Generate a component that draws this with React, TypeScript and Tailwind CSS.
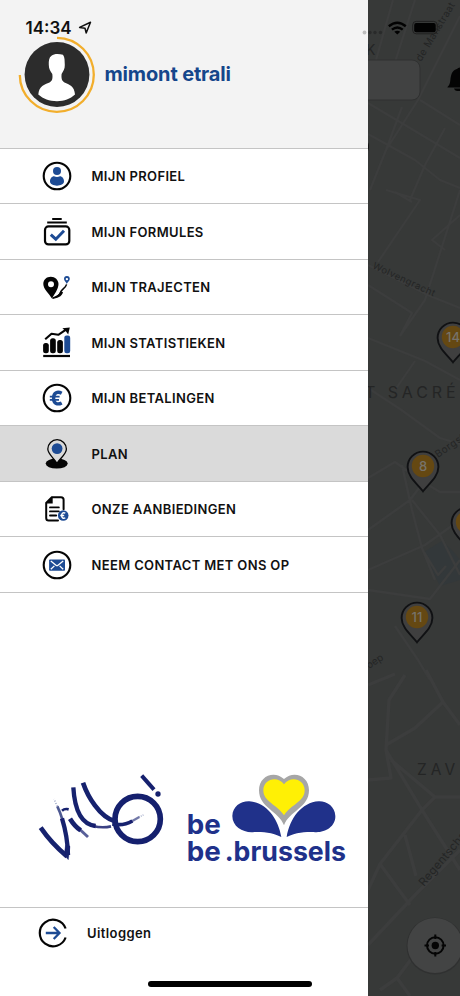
import type { ReactNode } from 'react';

const BLUE = '#1d4b94';

function Icon({ children }: { children: ReactNode }) {
  return (
    <svg width="32" height="32" viewBox="0 0 32 32" fill="none" className="shrink-0">
      {children}
    </svg>
  );
}

const ring = <circle cx="16" cy="16" r="13.3" stroke="#050505" strokeWidth="2.1" />;

const ProfileIcon = (
  <Icon>
    {ring}
    <circle cx="16" cy="11" r="4" fill={BLUE} />
    <path d="M9 21.5C9 18.5 11 16.3 13 16.3Q16 17.8 19 16.3C21 16.3 23 18.5 23 21.5C23 27 9 27 9 21.5Z" fill={BLUE} />
  </Icon>
);

const FormulaIcon = (
  <Icon>
    <path d="M11.2 2.9H20.7M6.2 6.6H25.8" stroke="#050505" strokeWidth="2" />
    <rect x="4" y="10.4" width="24.3" height="18" rx="3.5" stroke="#050505" strokeWidth="2.2" />
    <path d="M9.8 18.6L14.8 23.2L23 14.8" stroke={BLUE} strokeWidth="3" />
  </Icon>
);

const RouteIcon = (
  <Icon>
    <path
      fillRule="evenodd"
      d="M11 27.5C8 22.5 2.3 18 2.3 13C2.3 8.6 5.8 5.8 9.8 5.8C14 5.8 17.5 9 17.5 13C17.5 18 13.5 23 11 27.5ZM10 10.2A3 3 0 1 0 10 16.2A3 3 0 1 0 10 10.2Z"
      fill="#050505"
    />
    <path d="M11.5 27.2C17.5 25.5 19 24 19.6 21.2C20.3 18.3 24.5 17.3 25.6 13.4" stroke="#050505" strokeWidth="1.5" />
    <path d="M11 27.6C15.5 25.5 18.3 23.5 19.3 20.5L22 21C21 25.8 16 27.5 11 27.6Z" fill="#050505" />
    <path
      fillRule="evenodd"
      d="M25.8 13C25.3 11 23 9.8 23 8A2.9 2.9 0 0 1 28.8 8C28.8 9.8 26.4 11 25.8 13ZM25.9 6.9A1.2 1.2 0 1 0 25.9 9.3A1.2 1.2 0 1 0 25.9 6.9Z"
      fill={BLUE}
    />
  </Icon>
);

const StatsIcon = (
  <Icon>
    <path d="M2.2 29H29" stroke="#050505" strokeWidth="2.2" />
    <rect x="2.1" y="16" width="5.7" height="10.3" rx="2.5" fill="#050505" />
    <rect x="9.1" y="11.2" width="5.7" height="15.1" rx="2.5" fill="#050505" />
    <rect x="16.2" y="13" width="5.7" height="13.3" rx="2.5" fill="#050505" />
    <rect x="23.3" y="8.5" width="5.9" height="17.8" rx="2.2" fill={BLUE} />
    <path d="M4.2 12.3L10.5 6.7L17.3 7.8L25 2.7" stroke="#050505" strokeWidth="2.1" strokeLinejoin="round" />
    <path d="M21.4 1.3L28.8 .5L27.2 7.5L25 4.5Z" fill="#050505" />
  </Icon>
);

const PaymentIcon = (
  <Icon>
    {ring}
    <path d="M20.7 11.3C16.7 9.2 12.6 10.4 12.6 16.2C12.6 21.8 16.7 23 20.7 20.9" stroke={BLUE} strokeWidth="3.4" />
    <path d="M8.8 14.7H18.6M8.8 17.8H18" stroke={BLUE} strokeWidth="1.8" />
  </Icon>
);

const PlanIcon = (
  <Icon>
    <ellipse cx="15.7" cy="25.6" rx="11" ry="5" fill="#050505" />
    <path d="M16 25.5C13.6 20.5 6.8 16.3 6.8 11A9.3 9.3 0 0 1 25.4 11C25.4 16.3 18.7 20.5 16 25.5Z" fill="#dadada" stroke="#050505" strokeWidth="1.3" />
    <circle cx="16.1" cy="10.6" r="5.4" fill={BLUE} />
  </Icon>
);

const OfferIcon = (
  <Icon>
    <path d="M17 27.5H7.6Q5.2 27.5 5.2 25V10L10.8 4.2H20Q22.6 4.2 22.6 6.8V16.3" stroke="#050505" strokeWidth="2" strokeLinecap="round" />
    <path d="M5.2 10.5L11.7 3.5V10.5Z" fill="#050505" />
    <path d="M9 14.4H17.8M9 18.4H17.8M9 22.5H15.2" stroke="#050505" strokeWidth="1.9" strokeLinecap="round" />
    <circle cx="22.2" cy="22.5" r="5.3" fill={BLUE} />
    <path d="M24.3 20.2C21.7 18.9 20.6 21 20.6 22.6C20.6 24.5 22 26 24.3 24.9M19.3 22.5H23.2" stroke="white" strokeWidth="1.4" />
  </Icon>
);

const ContactIcon = (
  <Icon>
    {ring}
    <rect x="8.1" y="10.4" width="15.9" height="11.3" rx="0.8" fill={BLUE} />
    <path d="M9.8 12L15 16.2Q16 17 17 16.2L22.2 12M9.8 20.3L13.4 16.9M22.2 20.3L18.6 16.9" stroke="white" strokeWidth="1.3" />
  </Icon>
);

const items = [
  { label: 'MIJN PROFIEL', icon: ProfileIcon },
  { label: 'MIJN FORMULES', icon: FormulaIcon },
  { label: 'MIJN TRAJECTEN', icon: RouteIcon },
  { label: 'MIJN STATISTIEKEN', icon: StatsIcon },
  { label: 'MIJN BETALINGEN', icon: PaymentIcon },
  { label: 'PLAN', icon: PlanIcon, active: true },
  { label: 'ONZE AANBIEDINGEN', icon: OfferIcon },
  { label: 'NEEM CONTACT MET ONS OP', icon: ContactIcon },
];

function Pin({ x, y, label }: { x: number; y: number; label: string }) {
  return (
    <g transform={`translate(${x} ${y})`}>
      <path d="M0 24.3C-5 17.5-15.4 10-15.4 0A15.4 15.4 0 0 1 15.4 0C15.4 10 5 17.5 0 24.3Z" fill="#3f3f3f" stroke="#101113" strokeWidth="1.9" />
      <circle cx="0" cy="-1" r="11.2" fill="#654812" />
      <text x="0" y="3.5" textAnchor="middle" fontSize="13" fontWeight="500" fill="#77736b">{label}</text>
    </g>
  );
}

function MapBackdrop() {
  return (
    <svg className="absolute inset-0" width="460" height="996" viewBox="0 0 460 996" fontFamily="Inter, 'Liberation Sans', sans-serif">
      <rect width="460" height="996" fill="#373938" />
      <path d="M424 552L442 541L453 551L460 560V580L440 586L432 570Z" fill="#33383a" />
      <g fill="none" stroke="#3c3d3d" strokeLinejoin="round">
        <path d="M393 0L376 60M415 0L386 90M460 16L418 100L386 150L370 190M368 103L405 125L460 158M402 107L386 150M420 100L460 125M368 134L415 160L440 180L460 188M445 128L425 165L410 200M386 190L420 200L378 262M412 202L395 192M460 215L432 240L445 250M460 190L425 300L400 336M368 265L430 296L460 308M368 285L412 313L400 336M368 338L425 361L460 380M415 361L395 390M368 388L400 409L440 438L460 444" strokeWidth="2.2" />
        <path d="M368 478L395 462L420 480L440 492H460M368 530L410 500L425 480M402 465L412 510L422 548L435 580M412 500L440 535L460 575M368 570L425 545L460 520M368 590L430 599L460 560M395 626L418 660L430 680M424 552L438 575L446 566" strokeWidth="2.4" />
        <path d="M368 685L395 674M426 670L443 702L460 725M405 675L389 700L386 750L422 810L460 870M443 702L415 728L386 745M368 780L391 778L386 750M391 760L435 797L460 797M435 797L422 810L380 864L368 890M405 835L416 876M380 864L410 905M368 945L415 895L460 850M380 990L397 978L418 950M397 978L410 996" strokeWidth="3.4" />
      </g>
      <g fill="#242525">
        <text x="366" y="55" fontSize="14">K</text>
        <text transform="translate(421 62) rotate(-59)" fontSize="10" letterSpacing=".4">de Manstraat</text>
        <text transform="translate(372 268) rotate(25)" fontSize="9.5" letterSpacing=".5">Wolvengracht</text>
        <text x="365" y="398" fontSize="16" letterSpacing="3.9">T SACRÉ</text>
        <text transform="translate(438 458) rotate(-35)" fontSize="10" letterSpacing=".5">Borgstraat</text>
        <text transform="translate(369 669) rotate(-33)" fontSize="10">oep</text>
        <text x="417" y="775" fontSize="15.5" letterSpacing="4.1">ZAV</text>
        <text transform="translate(424 887) rotate(-50)" fontSize="11.5" letterSpacing=".3">Regentschapsstraat</text>
      </g>
      <Pin x={453} y={338} label="14" />
      <Pin x={423} y={467} label="8" />
      <Pin x={467} y={523} label="5" />
      <Pin x={417} y={618} label="11" />
      <rect x="340" y="60" width="80" height="40" rx="8" fill="#414242" stroke="#303131" strokeWidth="1" />
      <path d="M447.5 87C451 84 450 79 451 76C452 71.500 454.500 69.500 457 69Q458 67.500 461 67.500V87.500H447.500ZM454 88.500H461V91H457Q454.500 90.500 454 88.500Z" fill="#040404" />
      <path d="M366 140Q371 145 368 151Z" fill="#111" />
      <circle cx="435" cy="946" r="28.5" fill="#303131" />
      <circle cx="435" cy="945.5" r="27.5" fill="#434444" />
      <g stroke="#050505" fill="none" strokeWidth="2">
        <circle cx="435.3" cy="945.5" r="8.3" />
        <path d="M435.3 934.5V939M435.3 952V956.500M424.500 945.500H429M441.600 945.500H446" />
        <circle cx="435.3" cy="945.5" r="3.7" fill="#050505" stroke="none" />
      </g>
    </svg>
  );
}

function StatusBar() {
  return (
    <div className="absolute top-0 left-0 h-[56px] w-[460px]">
      <div className="flex h-full items-center pl-[25.5px] text-[17px] font-semibold text-[#101010]">
        <span className="mt-[2px] w-[51px]">14:34</span>
        <svg width="16" height="16" viewBox="0 0 16 16" className="ml-px">
          <path d="M1.6 7.4L12.500 2.200L8.200 13L7 8.300Z" fill="none" stroke="#101010" strokeWidth="1.5" strokeLinejoin="round" />
        </svg>
        <svg width="104" height="20" viewBox="0 0 104 20" className="ml-auto">
          <circle cx="8.5" cy="14.5" r="1.9" fill="#bdbdbd" />
          <g fill="#292a2a">
            <circle cx="14" cy="14.5" r="1.7" />
            <circle cx="19" cy="14.5" r="1.7" />
            <circle cx="24.5" cy="14.5" r="1.7" />
          </g>
          <g stroke="#020202" strokeWidth="2.4" fill="none">
            <path d="M32.8 8.2Q41.3 1.2 49.8 8.2M35.9 11.6Q41.3 7.2 46.7 11.6" />
            <path d="M38.3 13.8Q41.3 11.5 44.3 13.8L41.3 16.6Z" fill="#020202" stroke="none" />
          </g>
          <rect x="56.7" y="3.4" width="24.5" height="12.4" rx="3.5" fill="none" stroke="#202020" />
          <rect x="58.2" y="4.9" width="21.5" height="9.4" rx="2" fill="#020202" />
          <path d="M82.7 7.500Q84.500 9.500 82.700 11.700Z" fill="#202020" />
        </svg>
      </div>
    </div>
  );
}

function Avatar() {
  return (
    <svg width="78" height="78" viewBox="0 0 78 78" className="shrink-0">
      <path d="M39 1.8A37 37 0 1 1 1.8 39" fill="none" stroke="#f2ae2c" strokeWidth="2.3" />
      <circle cx="39" cy="38.5" r="32.4" fill="#2c2c2c" />
      <path
        d="M33.5 19.8C36 17.5 41 17.8 45 18.800C47 21.500 46.500 25 46.800 29C47 33 45 35.500 43.600 38C43.200 42 43.700 45 46.500 46.500C51 48.500 56.500 50 57 58.500C52 63 46.500 65.200 39 65.200C31 65.200 25.500 63 20.300 58.500C21 50 26.500 48.500 31.500 46.500C34.500 45 34.800 42 34.300 38C32.500 35.500 30.800 33 30.800 29C30.600 25 31 21.500 33.500 19.800Z"
        fill="white"
      />
    </svg>
  );
}

function VilloLogo() {
  return (
    <svg width="150" height="105" viewBox="0 0 450 315" fill="none" stroke="#15206e" className="shrink-0">
      <filter id="chalk" x="0" y="0" width="450" height="315" filterUnits="userSpaceOnUse">
        <feTurbulence type="fractalNoise" baseFrequency="0.12" numOctaves="2" seed="4" result="grain" />
        <feDisplacementMap in="SourceGraphic" in2="grain" scale="3.5" xChannelSelector="R" yChannelSelector="G" />
      </filter>
      <circle cx="338" cy="162" r="68" strokeWidth="17" />
      <path d="M350 32L387 74" strokeWidth="12" />
      <circle cx="399" cy="87" r="8" fill="#15206e" stroke="none" />
      <g filter="url(#chalk)">
        <path d="M47 188Q80 236 126 274" strokeWidth="14" />
        <path d="M117 270L130 284L135 244L122 240Z" fill="#15206e" />
        <path d="M129 270Q128 215 111 160" strokeWidth="13" />
        <path d="M113 166Q106 142 97 124" strokeWidth="8" opacity=".75" />
        <path d="M97 124L87 102" strokeWidth="5" strokeDasharray="3 5" opacity=".4" />
        <path d="M111 137Q119 130 131 133" strokeWidth="8" />
        <path d="M135 161Q149 184 167 196" strokeWidth="14" />
        <path d="M163 192L189 216" strokeWidth="9" opacity=".7" />
        <path d="M145 67C148 120 162 177 212 183" strokeWidth="13" />
        <path d="M204 183Q232 190 258 184" strokeWidth="8" opacity=".85" />
        <path d="M174 53C188 94 223 155 270 169" strokeWidth="14" />
        <path d="M262 177Q295 184 322 168" strokeWidth="11" />
        <path d="M318 170L343 156" strokeWidth="7" opacity=".6" />
        <path d="M342 156L357 149" strokeWidth="5" strokeDasharray="3 3" opacity=".3" />
      </g>
    </svg>
  );
}

function BrusselsLogo() {
  return (
    <svg width="180" height="105" viewBox="0 0 540 315" fill="#20318a" className="shrink-0" fontFamily="Inter, 'Liberation Sans', sans-serif">
      <path d="M304 216C276 202 249 201 223 201C193 205 157 187 157 153C158 124 182 108 208 109C259 112 295 161 304 216Z" />
      <path d="M320 216C348 202 375 201 401 201C431 205 467 187 466 153C465 124 440 108 416 109C365 112 329 161 320 216Z" />
      <path d="M312 181C296 138 237 128 237 76C237 32 283 15 312 42C341 15 387 32 387 76C387 128 328 138 312 181Z" fill="#a6a6a6" />
      <path d="M312 151C290 118 250 110 250 76C250 42 292 31 312 58C332 31 374 42 374 76C374 110 334 118 312 151Z" fill="#fff005" />
      <g fontSize="80" fontWeight="700">
        <text x="20" y="206" textLength="102" lengthAdjust="spacingAndGlyphs">be</text>
        <text x="20" y="287" textLength="102" lengthAdjust="spacingAndGlyphs">be</text>
        <text x="134" y="287" textLength="364" lengthAdjust="spacingAndGlyphs">.brussels</text>
      </g>
    </svg>
  );
}

export default function App() {
  return (
    <div className="relative h-[996px] w-[460px] overflow-hidden font-['Inter','Liberation_Sans',sans-serif]">
      <MapBackdrop />
      <aside className="relative flex h-[996px] w-[368px] flex-col bg-white">
        <header className="flex h-[148.5px] shrink-0 border-b border-[#c4c4c4] bg-[#f3f3f3] pt-[36px] pl-[18px]">
          <Avatar />
          <h1 className="mt-[24px] ml-[8.5px] text-[20px] leading-[28px] font-bold tracking-[-0.15px] whitespace-nowrap text-[#15468b]">mimont etrali</h1>
        </header>
        <nav className="shrink-0">
          {items.map((item) => (
            <div
              key={item.label}
              className={`flex h-[55.5px] items-center border-b border-[#c4c4c4] pt-px pl-[41px] ${item.active ? 'bg-[#dadada]' : 'bg-white'}`}
            >
              {item.icon}
              <span className="ml-[18.5px] pt-px text-[13px] font-semibold tracking-[0.35px] whitespace-nowrap text-[#111]">{item.label}</span>
            </div>
          ))}
        </nav>
        <div className="flex flex-1 items-start pt-[172.5px] pl-[25px]">
          <VilloLogo />
          <div className="ml-[5px]">
            <BrusselsLogo />
          </div>
        </div>
        <footer className="flex h-[89px] shrink-0 items-start border-t border-[#c4c4c4] pt-[9px] pl-[37px]">
          <Icon>
            <path d="M28.6 11.5A13.3 13.3 0 1 0 28.6 20.5" stroke="#050505" strokeWidth="2.2" />
            <path d="M8.8 16H22M16.7 10L22.5 16L16.7 22" stroke={BLUE} strokeWidth="2.3" />
          </Icon>
          <span className="mt-[6px] ml-[18px] text-[13px] leading-[20px] font-semibold tracking-[0.4px] text-[#111]">Uitloggen</span>
        </footer>
      </aside>
      <StatusBar />
      <div className="absolute top-[981px] left-[148px] h-[6px] w-[164px] rounded-full bg-black" />
    </div>
  );
}
